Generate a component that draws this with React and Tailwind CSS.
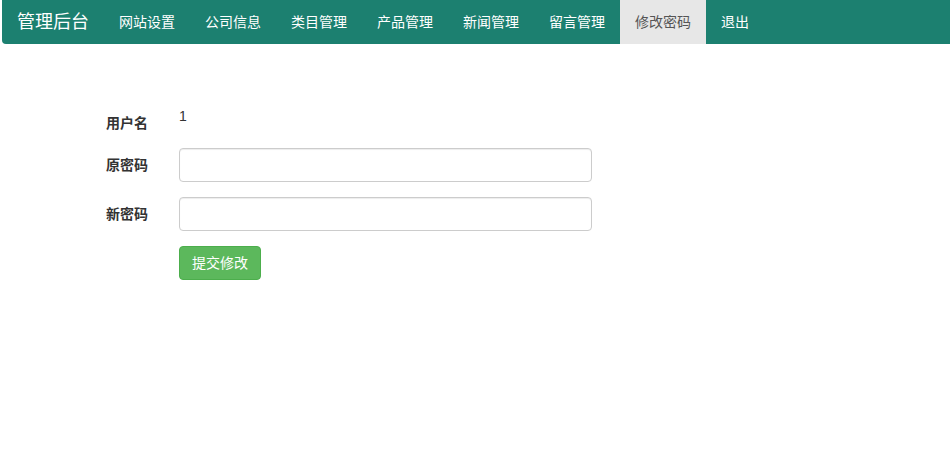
export default function App() {
  const items = ['网站设置', '公司信息', '类目管理', '产品管理', '新闻管理', '留言管理', '修改密码', '退出'];
  return (
    <div className="min-h-[463px] bg-white text-[14px] text-[#333] font-['Liberation_Sans','Noto_Sans_CJK_SC',sans-serif]">
      <nav className="ml-[2px] h-[44px] bg-[#1c8070] rounded-bl-[4px] flex items-stretch">
        <a className="px-[15px] flex items-center text-[18px] text-white">管理后台</a>
        {items.map((t) => (
          <a
            key={t}
            className={`px-[15px] flex items-center text-[14px] ${t === '修改密码' ? 'bg-[#e7e7e7] text-[#555]' : 'text-white'}`}
          >
            {t}
          </a>
        ))}
      </nav>

      <form className="mt-[62px] flex flex-col gap-[15px]">
        <div className="flex">
          <label className="w-[148px] text-right pt-[7px] leading-[20px] font-bold">用户名</label>
          <div className="ml-[31px] leading-[20px]">1</div>
        </div>
        <div className="flex">
          <label className="w-[148px] text-right pt-[7px] leading-[20px] font-bold">原密码</label>
          <input type="password" className="ml-[31px] w-[413px] h-[34px] border border-[#ccc] rounded-[4px] px-3 shadow-[inset_0_1px_1px_rgba(0,0,0,0.075)] outline-none" />
        </div>
        <div className="flex">
          <label className="w-[148px] text-right pt-[7px] leading-[20px] font-bold">新密码</label>
          <input type="password" className="ml-[31px] w-[413px] h-[34px] border border-[#ccc] rounded-[4px] px-3 shadow-[inset_0_1px_1px_rgba(0,0,0,0.075)] outline-none" />
        </div>
        <div className="flex">
          <button type="button" className="ml-[179px] h-[34px] px-[12px] bg-[#5cb85c] border border-[#4cae4c] rounded-[4px] text-white leading-[20px]">
            提交修改
          </button>
        </div>
      </form>
    </div>
  );
}
